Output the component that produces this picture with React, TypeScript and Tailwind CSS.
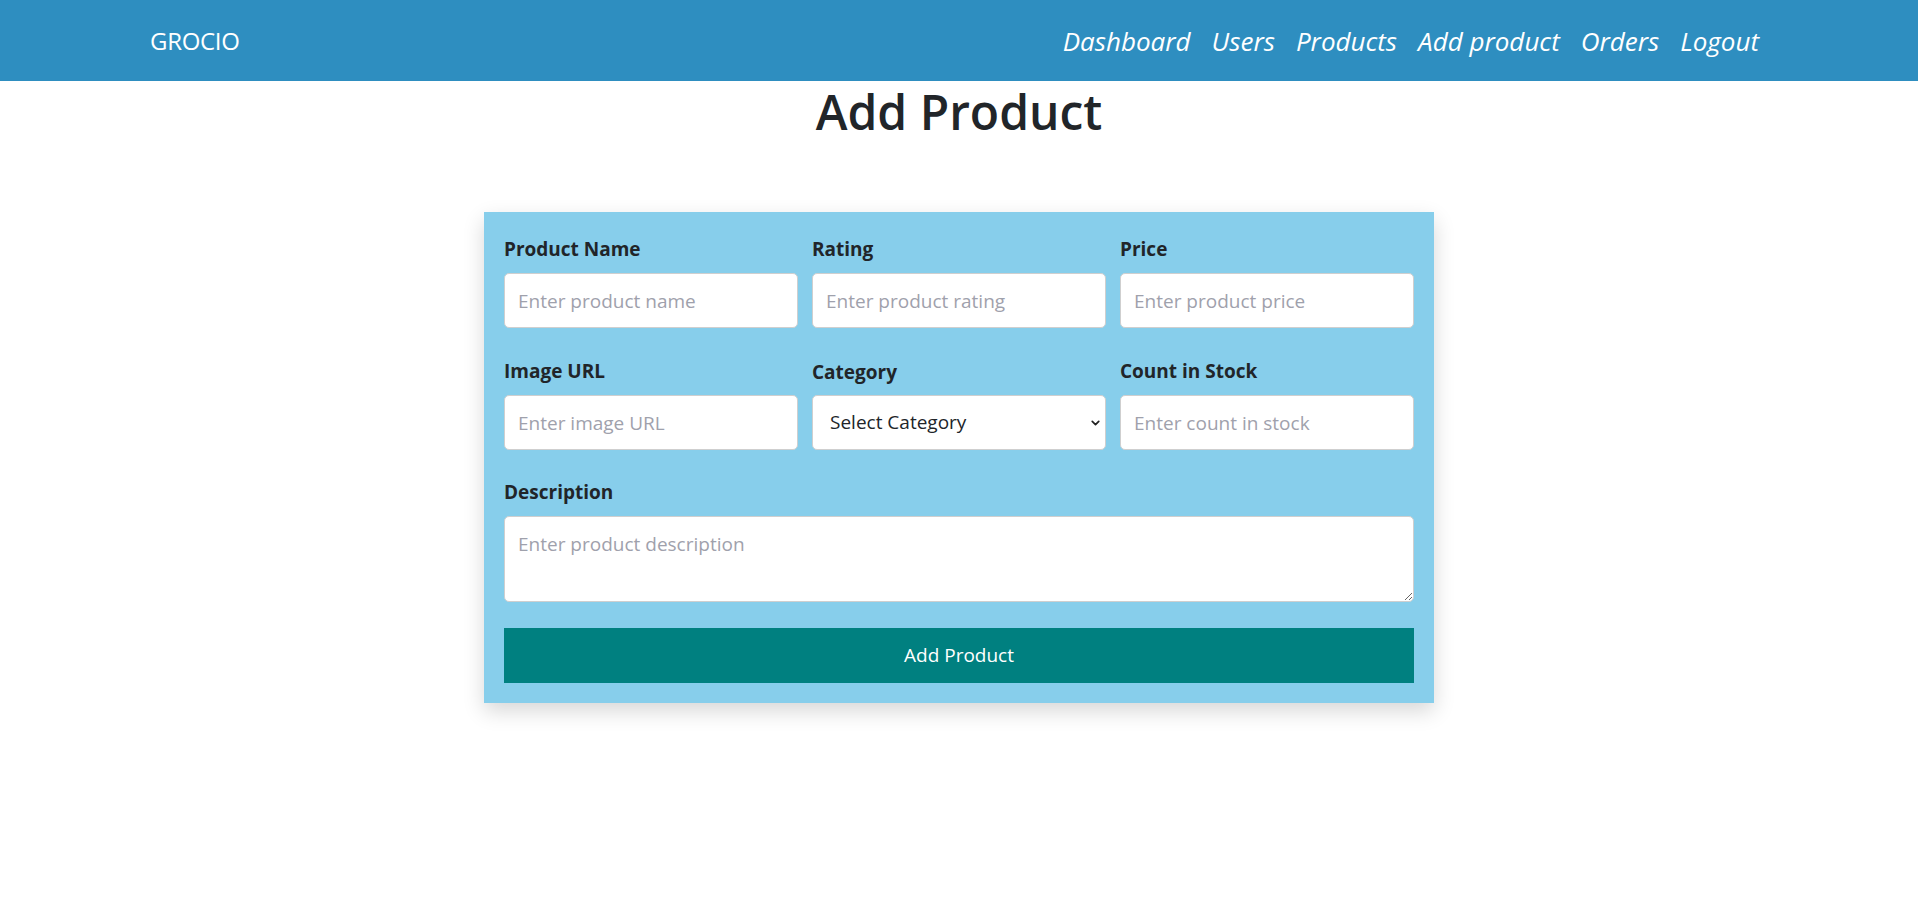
import { ChevronDown } from 'lucide-react';

const font = { fontFamily: '"Open Sans", "Noto Sans", sans-serif' };

const inputCls =
    'w-full h-[55px] bg-white border border-[#cfcfcf] rounded-[5px] px-[13px] text-[19px] text-[#212529] placeholder:text-[#9fa1ac] outline-none';

const labelCls = 'block h-[29px] text-[19px] leading-[29px] font-bold text-[#212529] mt-[3px] mb-[9px]';

function Field({ label, placeholder }: { label: string; placeholder: string }) {
    return (
        <div className="flex flex-col">
            <label className={labelCls}>{label}</label>
            <input type="text" className={inputCls} placeholder={placeholder} />
        </div>
    );
}

export default function App() {
    const links = ['Dashboard', 'Users', 'Products', 'Add product', 'Orders', 'Logout'];

    return (
        <div className="min-h-screen bg-white" style={font}>
            <header className="h-[81px] bg-[#2e8ec0] flex items-center justify-between pl-[150px] pr-[159px]">
                <a className="text-white text-[24px] tracking-[-0.3px] mt-[1px]">GROCIO</a>
                <nav className="flex items-center gap-[21px] mt-[2px]">
                    {links.map((l) => (
                        <a key={l} className="text-white italic text-[26px]">
                            {l}
                        </a>
                    ))}
                </nav>
            </header>

            <h1 className="text-center text-[48px] font-semibold text-[#212529] leading-[56px] mt-[3px]">Add Product</h1>

            <div className="w-[950px] mx-auto mt-[72px] bg-[#87ceeb] p-[20px] shadow-[0_8px_20px_rgba(0,0,0,0.16)]">
                <div className="grid grid-cols-3 gap-x-[14px] gap-y-[26px]">
                    <Field label="Product Name" placeholder="Enter product name" />
                    <Field label="Rating" placeholder="Enter product rating" />
                    <Field label="Price" placeholder="Enter product price" />
                    <Field label="Image URL" placeholder="Enter image URL" />
                    <div className="flex flex-col">
                        <label className="block h-[29px] text-[19px] leading-[29px] font-bold text-[#212529] mt-[4px] mb-[8px]">Category</label>
                        <div className="relative">
                            <select className="w-full h-[55px] bg-white border border-[#cfcfcf] rounded-[5px] pl-[17px] pr-8 text-[19px] text-[#212529] appearance-none outline-none">
                                <option>Select Category</option>
                                <option>Fruits</option>
                                <option>Vegetables</option>
                            </select>
                            <ChevronDown className="absolute right-[4px] top-1/2 -translate-y-1/2 w-[13px] h-[13px] text-[#222] pointer-events-none" strokeWidth={3.2} />
                        </div>
                    </div>
                    <Field label="Count in Stock" placeholder="Enter count in stock" />
                </div>

                <div className="mt-[25px] flex flex-col">
                    <label className={labelCls}>Description</label>
                    <textarea
                        className="block w-full h-[86px] bg-white border border-[#cfcfcf] rounded-[5px] px-[13px] py-[13px] text-[19px] placeholder:text-[#9fa1ac] outline-none"
                        placeholder="Enter product description"
                    />
                </div>

                <button className="mt-[26px] w-full h-[55px] bg-[#008080] text-white text-[19px]">Add Product</button>
            </div>
        </div>
    );
}
